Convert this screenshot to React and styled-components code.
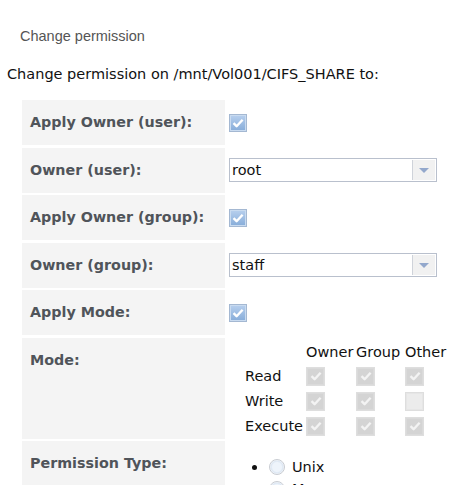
import React from 'react'
import styled, { createGlobalStyle } from 'styled-components';

const GlobalStyle = createGlobalStyle`
  html, body {
    margin: 0;
    padding: 0;
    background: #fff;
  }
  body {
    font-family: "DejaVu Sans", Verdana, sans-serif;
    font-size: 14.5px;
    color: #111;
  }
`

const Check = ({ color }) => (
    <svg width="12" height="10" viewBox="0 0 12 10">
        <path d="M1.5 5.2 L4.6 8.2 L10.6 1.8" fill="none" stroke={color} strokeWidth="2.4" strokeLinejoin="round" />
    </svg>
)

const Checkbox = ({ checked, disabled }) => (
    <Box disabled={disabled} checked={checked}>
        {checked && <Check color={disabled ? '#f3f3f3' : '#fff'} />}
    </Box>
)

const Select = ({ value }) => (
    <SelectBox>
        <SelectValue>{value}</SelectValue>
        <SelectArrow><Triangle /></SelectArrow>
    </SelectBox>
)

const Row = ({ label, tall, children }) => (
    <>
        <Label tall={tall}>{label}</Label>
        <Value top={tall}>{children}</Value>
    </>
)

const modes = [
    { name: 'Read', bits: [true, true, true] },
    { name: 'Write', bits: [true, true, false] },
    { name: 'Execute', bits: [true, true, true] },
]

const App = () => {
    return (
        <Page>
            <GlobalStyle />
            <Title>Change permission</Title>
            <PathLine>Change permission on /mnt/Vol001/CIFS_SHARE to:</PathLine>

            <Form>
                <Row label="Apply Owner (user):"><Checkbox checked /></Row>
                <Row label="Owner (user):"><Select value="root" /></Row>
                <Row label="Apply Owner (group):"><Checkbox checked /></Row>
                <Row label="Owner (group):"><Select value="staff" /></Row>
                <Row label="Apply Mode:"><Checkbox checked /></Row>
                <Row label="Mode:" tall>
                    <ModeTable>
                        <ModeHead />
                        <ModeHead>Owner</ModeHead>
                        <ModeHead>Group</ModeHead>
                        <ModeHead>Other</ModeHead>
                        {modes.map(m => (
                            <React.Fragment key={m.name}>
                                <ModeCell>{m.name}</ModeCell>
                                {m.bits.map((b, i) => (
                                    <ModeCell key={i}><Checkbox checked={b} disabled /></ModeCell>
                                ))}
                            </React.Fragment>
                        ))}
                    </ModeTable>
                </Row>
                <Row label="Permission Type:" tall>
                    <RadioList>
                        <RadioItem><Radio />Unix</RadioItem>
                        <RadioItem><Radio />Mac</RadioItem>
                    </RadioList>
                </Row>
            </Form>
        </Page>
    )
}

export default App

const Page = styled.div`
  width: 471px;
  height: 485px;
  overflow: hidden;
`
const Title = styled.div`
  padding: 27px 0 0 20px;
  font-family: "Liberation Sans", Arial, sans-serif;
  font-size: 14.5px;
  line-height: 18px;
  color: #555;
`
const PathLine = styled.div`
  margin-top: 20px;
  padding-left: 7px;
  line-height: 18px;
  color: #111;
`
const Form = styled.div`
  margin: 17px 0 0 22px;
  display: grid;
  grid-template-columns: 203px 236px;
  column-gap: 2px;
  row-gap: 2.5px;
`
const Label = styled.div`
  background: #f4f4f4;
  min-height: ${p => (p.tall ? '17px' : '45px')};
  box-sizing: border-box;
  padding: 14px 8px;
  font-size: 14.3px;
  font-weight: bold;
  line-height: 17px;
  color: #50545a;
  display: flex;
  align-items: ${p => (p.tall ? 'flex-start' : 'center')};
`
const Value = styled.div`
  display: flex;
  align-items: ${p => (p.top ? 'flex-start' : 'center')};
  padding-left: 2px;
`
const Box = styled.span`
  box-sizing: border-box;
  width: ${p => (p.disabled ? '19px' : '18px')};
  height: ${p => (p.disabled ? '19px' : '18px')};
  display: inline-flex;
  align-items: center;
  justify-content: center;
  border: 1px solid ${p => (p.disabled ? '#dedede' : '#a4b8d2')};
  background: ${p => (p.disabled
        ? (p.checked ? '#d4d4d4' : '#ececec')
        : 'linear-gradient(#b8d0ee, #86acd9)')};
  box-shadow: inset 0 0 0 1px ${p => (p.disabled ? (p.checked ? '#dadada' : '#e6e6e6') : '#c9dbf0')};
`
const SelectBox = styled.div`
  box-sizing: border-box;
  width: 208px;
  height: 24px;
  display: flex;
  border: 1px solid #b9c0cd;
  background: #fff;
`
const SelectValue = styled.div`
  flex: 1;
  padding-left: 2px;
  line-height: 22px;
  color: #111;
`
const SelectArrow = styled.div`
  width: 22px;
  margin: 1px;
  border-left: 1px solid #cfd3da;
  background: #f1f1f1;
  display: flex;
  align-items: center;
  justify-content: center;
`
const Triangle = styled.span`
  width: 0;
  height: 0;
  border-left: 5px solid transparent;
  border-right: 5px solid transparent;
  border-top: 5px solid #93a8cc;
`
const ModeTable = styled.div`
  margin: 2px 0 0 16px;
  display: grid;
  grid-template-columns: 58px 50px 49px 45px;
  grid-template-rows: 24px repeat(3, 25px);
  color: #111;
`
const ModeHead = styled.div`
  padding-left: 3px;
  line-height: 24px;
  &:first-child { padding-left: 0; }
`
const ModeCell = styled.div`
  display: flex;
  align-items: center;
  padding-left: 3px;
  &:nth-child(4n + 1) { padding-left: 0; }
`
const RadioList = styled.div`
  margin: 15px 0 0 21px;
  display: flex;
  flex-direction: column;
`
const RadioItem = styled.div`
  height: 22px;
  display: flex;
  align-items: center;
  position: relative;
  padding-left: 19px;
  color: #111;
  &:first-child::before {
    content: '';
    position: absolute;
    left: 2px;
    top: 9px;
    width: 5px;
    height: 5px;
    border-radius: 50%;
    background: #111;
  }
`
const Radio = styled.span`
  box-sizing: border-box;
  width: 16px;
  height: 16px;
  margin-right: 7px;
  border-radius: 50%;
  border: 1px solid #c8ccd2;
  background: radial-gradient(circle, #eef4fb 0 45%, #dde7f3 60%, #fff 75%);
`
